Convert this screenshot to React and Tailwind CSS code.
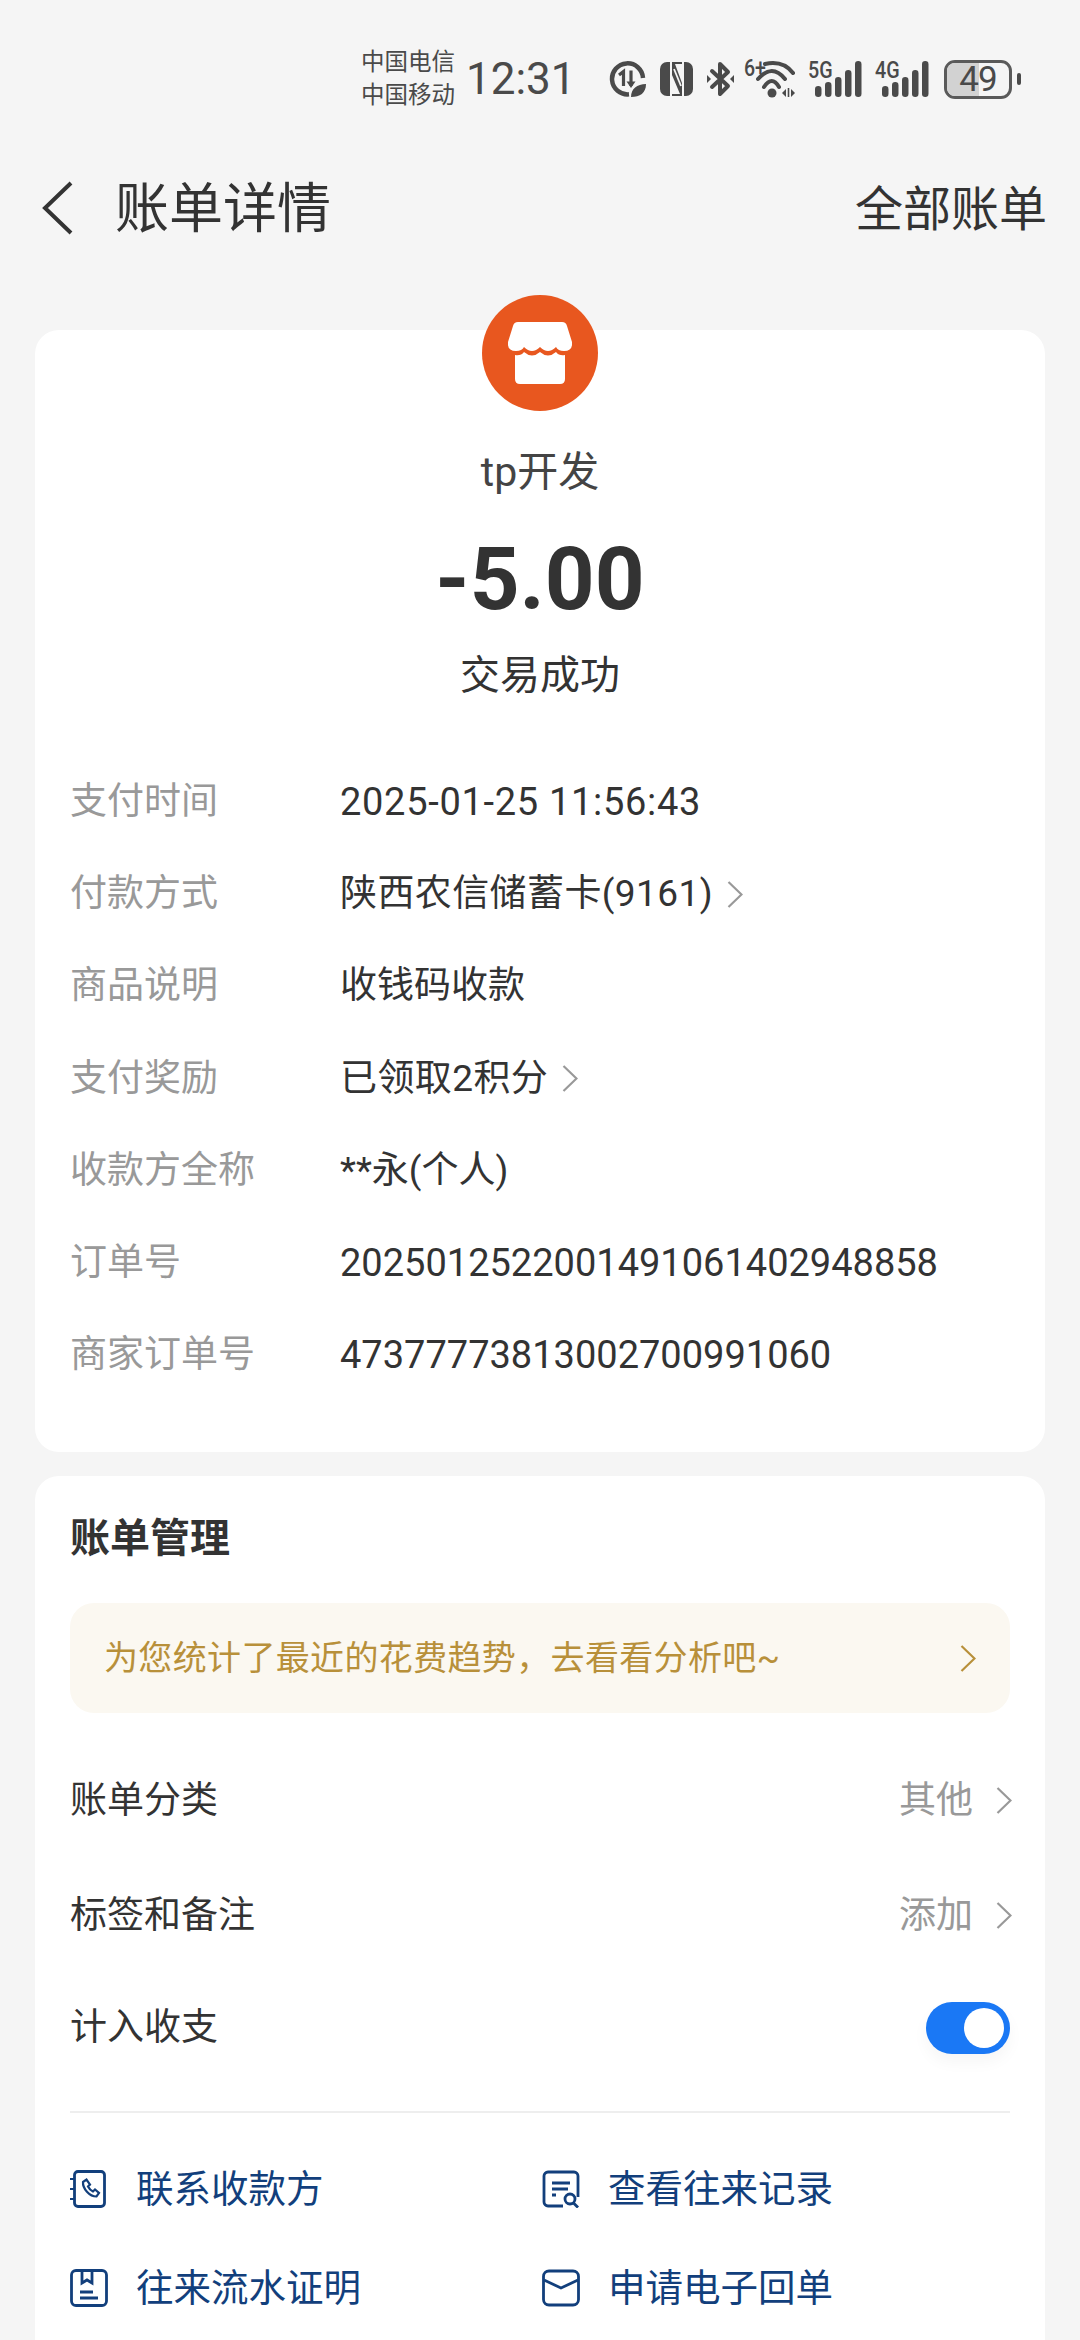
const font = "font-['Roboto','Noto_Sans_CJK_SC',sans-serif]";

const details = [
  { label: "支付时间", value: "2025-01-25 11:56:43", track: "text-[38px] tracking-[0.7px]" },
  { label: "付款方式", value: "陕西农信储蓄卡(9161)", track: "tracking-[0.4px]", arrow: true },
  { label: "商品说明", value: "收钱码收款" },
  { label: "支付奖励", value: "已领取2积分", track: "tracking-[0.4px]", arrow: true },
  { label: "收款方全称", value: "**永(个人)" },
  { label: "订单号", value: "2025012522001491061402948858", track: "text-[38px]" },
  { label: "商家订单号", value: "47377773813002700991060", track: "text-[38px]" },
];

function Signal({ label }) {
  return (
    <div className="relative w-[54px] h-[36px]">
      <span className="absolute left-0 top-[-2px] origin-left scale-x-[0.82] text-[24px] leading-[22px] font-medium text-[#4a4a4a]">{label}</span>
      <svg width="54" height="36" viewBox="0 0 54 36" fill="#4a4a4a">
        <rect x="7" y="25" width="6.500" height="11" rx="3.200" />
        <rect x="17" y="21" width="6.500" height="15" rx="3.200" />
        <rect x="27" y="16" width="6.500" height="20" rx="3.200" />
        <rect x="37" y="9" width="6.500" height="27" rx="3.200" />
        <rect x="47" y="0" width="6.500" height="36" rx="3.200" />
      </svg>
    </div>
  );
}

function StatusBar() {
  return (
    <div className="h-[158px] pl-[361px] flex items-center text-[#4a4a4a]">
      <div className="w-[105px] text-[23.5px] leading-[33px]">
        <div>中国电信</div>
        <div>中国移动</div>
      </div>
      <div className="w-[109px] text-[44px] leading-[50px]">12:31</div>
      <svg className="ml-[34px]" width="37" height="36" viewBox="0 0 37 36" fill="none" stroke="#4a4a4a">
        <path d="M20 33.300A15.500 15.500 0 1 1 34 17" strokeWidth="4.500" />
        <path d="M10 14l4.500-3.500V25" strokeWidth="3.200" />
        <path d="M22 9.500V25" strokeWidth="3.200" />
        <path d="M17.500 20.500L22 27l4.500-6.500z" fill="#4a4a4a" stroke="none" />
        <path d="M22 36c0-8 6-13 15-13 0 9-6 13-15 13z" fill="#4a4a4a" stroke="none" />
      </svg>
      <svg className="ml-[14px]" width="33" height="34" viewBox="0 0 33 34">
        <rect width="33" height="34" rx="7" fill="#4a4a4a" />
        <path d="M10 0h2v34h-2zM22 0h2v34h-2z" fill="#f5f5f5" />
        <path d="M15 2h7v19zM12 13l8 19h-8z" fill="#f5f5f5" />
        <path d="M14 7l7 17" stroke="#f5f5f5" strokeWidth="1.800" />
      </svg>
      <svg className="ml-[14px]" width="27" height="36" viewBox="0 0 27 36" fill="#4a4a4a">
        <path d="M5 10l16 15-8 8V3l8 8L5 26" fill="none" stroke="#4a4a4a" strokeWidth="4" strokeLinecap="round" strokeLinejoin="round" />
        <path d="M0 14l4 4-4 4zM27 14l-4 4 4 4z" />
      </svg>
      <div className="relative ml-[10px] w-[51px] h-[38px]">
        <span className="absolute left-0 top-[-1px] origin-left scale-x-[0.85] text-[23px] leading-[20px] font-medium">6+</span>
        <svg width="51" height="38" viewBox="0 0 51 38" fill="none" stroke="#4a4a4a" strokeWidth="4" strokeLinecap="round">
          <path d="M21 4Q39 0 49 13M14 19Q28 3 41 19M20 27Q28 15 35 27" />
          <circle cx="28" cy="33" r="4.500" fill="#4a4a4a" stroke="none" />
          <path d="M38 33l4-4v8zM51 33l-4-4v8z" fill="#4a4a4a" stroke="none" />
          <path d="M44.500 28v9" strokeWidth="1.600" strokeLinecap="butt" />
        </svg>
      </div>
      <div className="ml-[13px] mr-[13px]"><Signal label="5G" /></div>
      <Signal label="4G" />
      <div className="flex items-center ml-[15px]">
        <div className="relative w-[68px] h-[39px] border-[3px] border-[#5a5a5a] rounded-[11px] overflow-hidden flex items-center justify-center">
          <div className="absolute left-0 top-0 bottom-0 w-[32px] bg-[#d2d2d2]"></div>
          <span className="relative text-[35px] leading-none tracking-[-1px]">49</span>
        </div>
        <div className="w-[4px] h-[12px] ml-[5px] rounded-full bg-[#4a4a4a]"></div>
      </div>
    </div>
  );
}

function Chevron({ className }) {
  return (
    <svg className={className} width="16" height="27" viewBox="0 0 16 27" fill="none" stroke="currentColor" strokeWidth="2.200">
      <path d="M1.500 1l13 12.500L1.500 26" />
    </svg>
  );
}

function LinkIcon({ kind }) {
  const common = { width: 38, height: 38, viewBox: "0 0 38 38", fill: "none", stroke: "#123f7c", strokeWidth: 2.8 };
  if (kind === "phone") {
    return (
      <svg {...common}>
        <rect x="4.500" y="1.500" width="30" height="35" rx="3.500" />
        <path d="M0 9h5M0 19h5M0 29h5" strokeWidth="2.200" />
        <path d="M13 12l3.500-2.500 3.500 5-2 2c1 2 3 4 5 5l2-2 4 3.500-2.500 3.500c-7 0-14-8-13.500-14.500z" strokeWidth="2.200" />
      </svg>
    );
  }
  if (kind === "record") {
    return (
      <svg {...common}>
        <path d="M21 36H6a4 4 0 0 1-4-4V6a4 4 0 0 1 4-4h26a4 4 0 0 1 4 4v21" />
        <path d="M10 13h18M10 19h16M10 25h4" />
        <circle cx="28" cy="29" r="5" />
        <path d="M31.500 33l4.500 4.500" />
      </svg>
    );
  }
  if (kind === "book") {
    return (
      <svg {...common}>
        <rect x="1.500" y="1.500" width="35" height="35" rx="4.500" />
        <path d="M12 2v12l5-3 5 3V2M10 23h13M10 29h18" />
      </svg>
    );
  }
  return (
    <svg {...common}>
      <rect x="1.500" y="2" width="35" height="34" rx="5.500" />
      <path d="M2 11l17 8 17-8" />
    </svg>
  );
}

function QuickLink({ kind, text }) {
  return (
    <div className="flex items-center">
      <LinkIcon kind={kind} />
      <span className="ml-[28px] text-[37.5px] leading-[44px] text-[#123f7c]">{text}</span>
    </div>
  );
}

export default function App() {
  return (
    <div className={`${font} w-[1080px] h-[2340px] overflow-hidden bg-[#f5f5f5]`}>
      <StatusBar />

      <div className="h-[100px] flex items-center justify-between pr-[33px]">
        <div className="flex items-center">
          <svg className="ml-[41px]" width="32" height="54" viewBox="0 0 32 54" fill="none" stroke="#333" strokeWidth="4">
            <path d="M30 2L4 27l26 25" />
          </svg>
          <h1 className="ml-[42px] mt-[3px] text-[54px] leading-[60px] text-[#333]">账单详情</h1>
        </div>
        <span className="mt-[3px] text-[48px] leading-[56px] text-[#333]">全部账单</span>
      </div>

      <div className="mx-[35px] mt-[72px] h-[1122px] bg-white rounded-[24px] flex flex-col items-center relative">
        <div className="absolute top-[-35px] w-[116px] h-[116px] rounded-full bg-[#e8571f] flex items-center justify-center">
          <svg width="64" height="62" viewBox="0 0 64 62" fill="#fff">
            <path d="M10 0H54Q58 0 59 4L64 20Q65 29 56 29Q50 29 48 25Q40 33 32 25Q24 33 16 25Q14 29 8 29Q-1 29 0 20L5 4Q6 0 10 0Z" />
            <path d="M7 33Q13 34 16 30Q24 37 32 30Q40 37 48 30Q51 34 57 33V57Q57 62 52 62H12Q7 62 7 57Z" />
          </svg>
        </div>

        <div className="mt-[118px] text-[41px] leading-[48px] text-[#444]">tp开发</div>
        <div className="mt-[33px] text-[87px] leading-[100px] font-bold text-[#333]">-5.00</div>
        <div className="mt-[22px] text-[40px] leading-[50px] text-[#333]">交易成功</div>

        <div className="mt-[55px] w-full px-[35px] flex flex-col">
          {details.map((d) => (
            <div key={d.label} className="h-[92.2px] flex items-center text-[37px] leading-[46px]">
              <span className="w-[270px] text-[#999]">{d.label}</span>
              <span className={`text-[#333] ${d.track || ""}`}>{d.value}</span>
              {d.arrow && <Chevron className="ml-[14px] text-[#999]" />}
            </div>
          ))}
        </div>
      </div>

      <div className="mx-[35px] mt-[24px] h-[900px] bg-white rounded-[24px] px-[35px]">
        <h2 className="pt-[39px] text-[40px] leading-[48px] font-bold text-[#333]">账单管理</h2>
        <div className="mt-[40px] h-[110px] rounded-[24px] bg-[#fbf8f1] pl-[34px] pr-[34px] flex items-center justify-between">
          <span className="text-[34px] tracking-[0.35px] text-[#b8903a]">为您统计了最近的花费趋势，去看看分析吧~</span>
          <Chevron className="text-[#b8903a]" />
        </div>

        <div className="mt-[30px] h-[115px] flex items-center justify-between text-[37px]">
          <span className="text-[#333]">账单分类</span>
          <span className="flex items-center text-[#999]">其他<Chevron className="ml-[23px] mr-[-2px]" /></span>
        </div>
        <div className="h-[115px] flex items-center justify-between text-[37px]">
          <span className="text-[#333]">标签和备注</span>
          <span className="flex items-center text-[#999]">添加<Chevron className="ml-[23px] mr-[-2px]" /></span>
        </div>
        <div className="h-[109px] flex items-center justify-between text-[37px]">
          <span className="text-[#333]">计入收支</span>
          <div className="w-[84px] h-[52px] rounded-full bg-[#1a78f5] flex items-center justify-end pr-[6px] shadow-[0_8px_16px_rgba(0,0,0,0.04)]">
            <div className="w-[40px] h-[40px] rounded-full bg-white"></div>
          </div>
        </div>

        <div className="mt-[29px] h-[2px] bg-[#eee]"></div>

        <div className="mt-[54px] grid grid-cols-[472px_1fr] gap-y-[55px]">
          <QuickLink kind="phone" text="联系收款方" />
          <QuickLink kind="record" text="查看往来记录" />
          <QuickLink kind="book" text="往来流水证明" />
          <QuickLink kind="mail" text="申请电子回单" />
        </div>
      </div>
    </div>
  );
}
